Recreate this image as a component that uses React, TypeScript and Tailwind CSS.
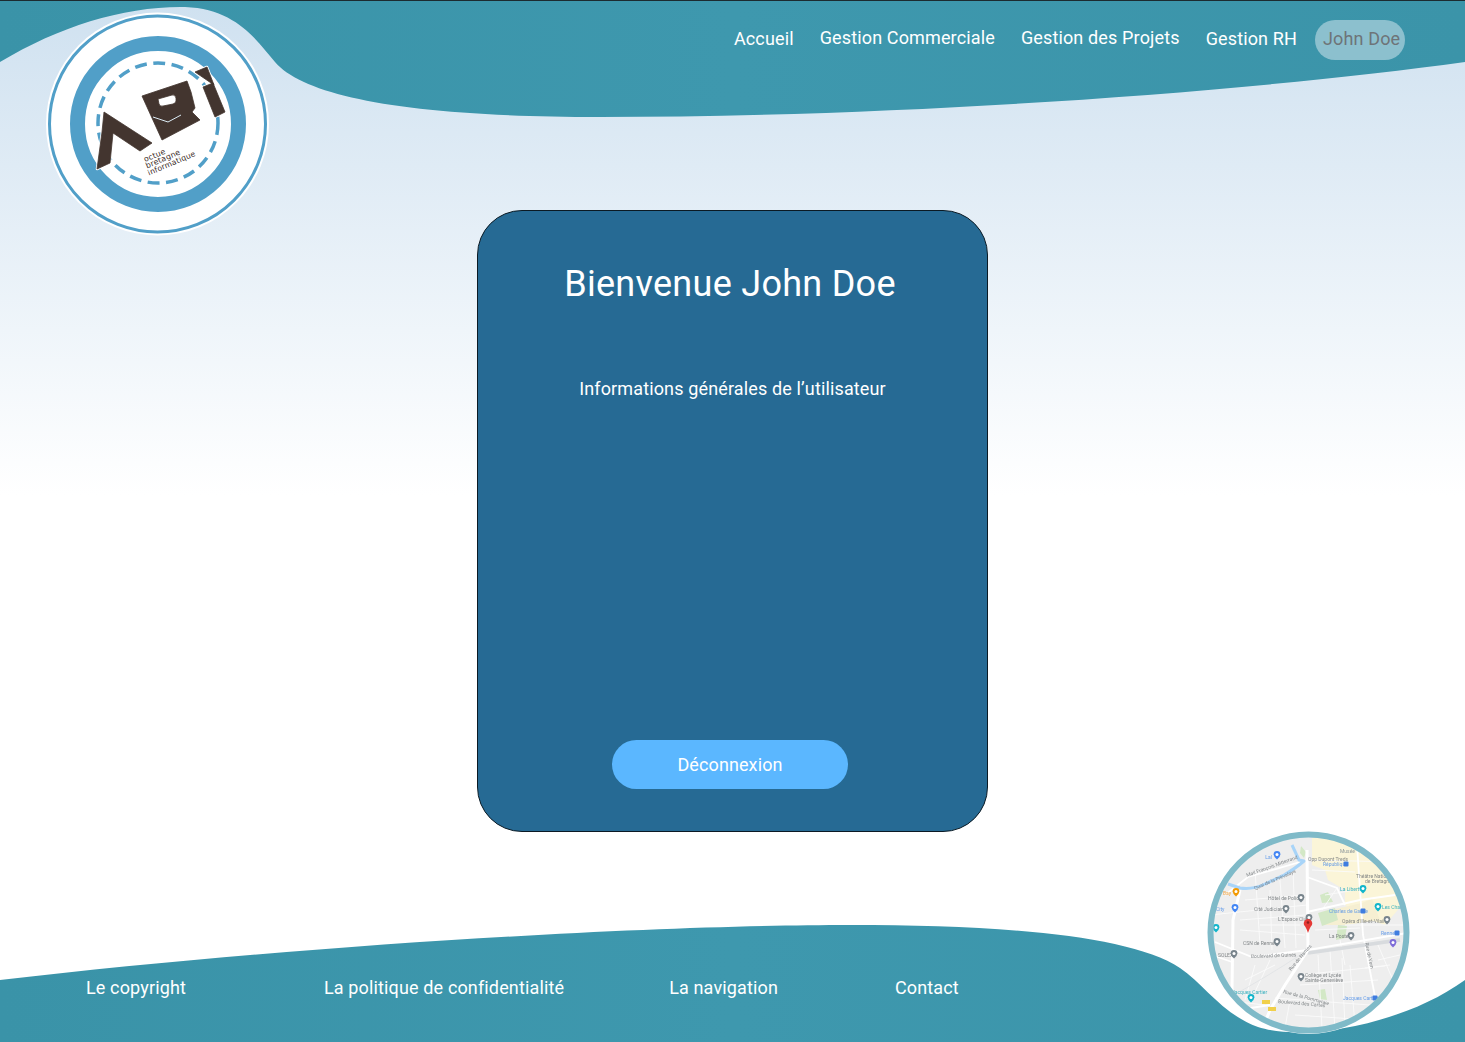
import React from "react";

const roboto = "font-['Roboto',sans-serif]";

function Waves() {
  return (
    <svg className="absolute left-0 top-0 h-[1042px] w-[1465px]" viewBox="0 0 1465 1042" aria-hidden="true">
      <defs>
        <linearGradient id="hdr" x1="0" y1="0" x2="1" y2="0">
          <stop offset="0" stopColor="#3a93a8" />
          <stop offset="0.5" stopColor="#3e98ae" />
          <stop offset="1" stopColor="#3b94a9" />
        </linearGradient>
      </defs>
      <path
        d="M0,62 C60,26 125,6 185,7 C235,9 255,38 275,62 C305,97 410,117 600,117 C900,117 1250,92 1465,62 L1465,0 L0,0 Z"
        fill="url(#hdr)"
      />
      <rect x="0" y="0" width="1465" height="1" fill="#1c2b30" />
      <path
        d="M0,980 C300,945 650,925 850,925 C1000,925 1130,935 1180,968 C1205,985 1222,1014 1258,1027 C1300,1041 1400,1027 1465,980 L1465,1042 L0,1042 Z"
        fill="url(#hdr)"
      />
    </svg>
  );
}

function Logo() {
  return (
    <svg className="absolute left-[46px] top-[12px] h-[224px] w-[224px]" viewBox="46 12 224 224" aria-label="ABI">
      <circle cx="157.5" cy="124" r="111.5" fill="#ffffff" />
      <circle cx="157.5" cy="124" r="108" fill="none" stroke="#519fc8" strokeWidth="3" />
      <circle cx="158" cy="124" r="80.5" fill="none" stroke="#519fc8" strokeWidth="15" />
      <circle cx="158" cy="123" r="60" fill="none" stroke="#519fc8" strokeWidth="3.5" strokeDasharray="12 6.5" />
      <g fill="#ffffff" stroke="#ffffff" strokeWidth="2.5" strokeLinejoin="round">
        <polygon points="104,112 152,143 140,151 113,133 110,163 97,169 102,132" />
        <polygon points="195,72 207,67 214,85" />
        <polygon points="203,87 213,83 225,112 215,117" />
      </g>
      <g fill="#43352f" stroke="#43352f" strokeWidth="0.8" strokeLinejoin="round">
        <polygon points="104,112 152,143 140,151 113,133 110,163 97,169 102,132" />
        <path
          fillRule="evenodd"
          d="M142,96 L187,81 L191,92 L195,108 L192,112 L200,120 L162,140 L142,96 Z M158,99 L172,95 Q175,94 176,98 L176,101 Q176,103 173,104 L163,106 Q160,107 159,104 Z"
        />
        <polygon points="195,72 207,67 214,85" />
        <polygon points="203,87 213,83 225,112 215,117" />
      </g>
      <path d="M153,117 L168,122 L181,115" fill="none" stroke="#dcecf5" strokeWidth="1" />
      <g fill="#3a2a25" fontFamily="'DejaVu Sans',sans-serif" fontSize="7.8" letterSpacing="0.2">
        <text transform="translate(145,162) rotate(-22)">octue</text>
        <text transform="translate(147,168.5) rotate(-23)">bretagne</text>
        <text transform="translate(149,175.5) rotate(-23)" fontSize="7.6">informatique</text>
      </g>
    </svg>
  );
}

type Label = { x: number; y: number; t: string; c: string; a?: "start" | "middle" | "end"; r?: number };

const labels: Label[] = [
  { x: 1272, y: 859, t: "Lal", c: "#4f8fe8", a: "end" },
  { x: 1308, y: 861, t: "Opp Dupont Treds", c: "#6f7477" },
  { x: 1340, y: 853, t: "Musée", c: "#7d8a92" },
  { x: 1323, y: 866, t: "République", c: "#4f8fe8" },
  { x: 1356, y: 878, t: "Théâtre National", c: "#6f7477" },
  { x: 1365, y: 883, t: "de Bretagne", c: "#6f7477" },
  { x: 1340, y: 891, t: "La Liberté", c: "#20a8b8" },
  { x: 1382, y: 909, t: "Les Champs", c: "#20a8b8" },
  { x: 1329, y: 913, t: "Charles de Gaulle", c: "#4f8fe8" },
  { x: 1342, y: 923, t: "Opéra d'Ille-et-Vilaine", c: "#6f7477" },
  { x: 1381, y: 935, t: "Rennes", c: "#4f8fe8" },
  { x: 1329, y: 938, t: "La Poste", c: "#6f7477" },
  { x: 1278, y: 921, t: "L'Espace Club", c: "#6f7477" },
  { x: 1254, y: 911, t: "Cité Judiciaire", c: "#6f7477" },
  { x: 1268, y: 900, t: "Hôtel de Police", c: "#6f7477" },
  { x: 1247, y: 877, t: "Mail François Mitterrand", c: "#6f7477", r: -20 },
  { x: 1255, y: 890, t: "Quai de la Prévalaye", c: "#6f7477", r: -23 },
  { x: 1223, y: 895, t: "Bay", c: "#ef9a2c" },
  { x: 1216, y: 911, t: "City", c: "#4f8fe8" },
  { x: 1243, y: 945, t: "CSN de Rennes", c: "#6f7477" },
  { x: 1218, y: 957, t: "SOLEX", c: "#6f7477" },
  { x: 1251, y: 958, t: "Boulevard de Guines", c: "#6f7477", r: -2 },
  { x: 1305, y: 977, t: "Collège et Lycée", c: "#6f7477" },
  { x: 1305, y: 982, t: "Sainte-Geneviève", c: "#6f7477" },
  { x: 1343, y: 1000, t: "Jacques Cartier", c: "#4f8fe8" },
  { x: 1232, y: 994, t: "Jacques Cartier", c: "#20a8b8" },
  { x: 1291, y: 971, t: "Rue de Nantes", c: "#6f7477", r: -50 },
  { x: 1365, y: 943, t: "Rue de Vern", c: "#6f7477", r: 78 },
  { x: 1283, y: 993, t: "Rue de la Pommeraie", c: "#6f7477", r: 15 },
  { x: 1278, y: 1003, t: "Boulevard des Cartes", c: "#6f7477", r: 5 },
];

const pins: { x: number; y: number; c: string }[] = [
  { x: 1277, y: 855, c: "#4285f4" },
  { x: 1363, y: 889, c: "#12b5cb" },
  { x: 1378, y: 907, c: "#12b5cb" },
  { x: 1387, y: 920, c: "#78848c" },
  { x: 1393, y: 943, c: "#7e6cd8" },
  { x: 1351, y: 936, c: "#78848c" },
  { x: 1309, y: 918, c: "#78848c" },
  { x: 1286, y: 909, c: "#78848c" },
  { x: 1301, y: 898, c: "#78848c" },
  { x: 1236, y: 892, c: "#f29900" },
  { x: 1235, y: 908, c: "#4285f4" },
  { x: 1216, y: 928, c: "#12b5cb" },
  { x: 1277, y: 942, c: "#78848c" },
  { x: 1234, y: 954, c: "#78848c" },
  { x: 1301, y: 977, c: "#78848c" },
  { x: 1251, y: 998, c: "#12b5cb" },
];

const badges: [number, number][] = [
  [1346, 864],
  [1363, 911],
  [1397, 933],
  [1375, 998],
];

const majorRoads = [
  "M1307,850 L1308,950",
  "M1308,950 L1285,985 L1270,1010 L1262,1030",
  "M1240,890 L1233,920 L1232,990",
];

const mediumRoads = [
  "M1215,942 L1252,957 L1308,950 L1407,933",
  "M1212,955 L1232,962",
  "M1357,845 L1363,935 L1377,1007",
  "M1225,895 L1248,877 L1307,860",
  "M1307,877 L1337,888 L1345,905",
  "M1307,912 L1360,900 L1395,895",
  "M1225,1012 L1270,1005",
];

const minorRoads = [
  "M1307,860 L1400,862",
  "M1210,915 L1307,905",
  "M1337,888 L1322,910",
  "M1300,975 L1385,966",
  "M1275,998 L1370,1005",
  "M1330,950 L1335,1030",
  "M1265,1005 L1220,1000",
  "M1345,925 L1405,925",
  "M1340,940 L1345,965",
  "M1260,925 L1300,925",
  "M1255,870 L1260,945",
  "M1280,880 L1285,948",
  "M1240,930 L1305,935",
  "M1350,965 L1355,1025",
  "M1378,960 L1400,955",
  "M1245,980 L1275,965",
  "M1270,890 L1272,950",
  "M1293,870 L1296,948",
  "M1245,900 L1305,895",
  "M1240,920 L1305,915",
  "M1318,955 L1322,1028",
  "M1342,958 L1345,1028",
  "M1365,968 L1390,965",
  "M1300,985 L1378,980",
  "M1295,1015 L1368,1020",
  "M1290,1000 L1285,1028",
  "M1378,945 L1395,985",
  "M1312,870 L1355,872",
  "M1325,895 L1355,890",
  "M1315,930 L1360,928",
  "M1255,965 L1245,1000",
  "M1270,960 L1255,992",
];

function MapBadge() {
  return (
    <svg className="absolute left-[1207px] top-[831px] h-[204px] w-[204px]" viewBox="1207 831 204 204" aria-label="Carte">
      <defs>
        <clipPath id="mapclip">
          <circle cx="1308.5" cy="932.5" r="98" />
        </clipPath>
      </defs>
      <circle cx="1308.5" cy="932.5" r="101.5" fill="#ffffff" />
      <g clipPath="url(#mapclip)">
        <g className="blur-[0.45px]">
          <rect x="1207" y="831" width="204" height="204" fill="#eeeeee" />
          <polygon
            points="1312,838 1400,838 1402,905 1385,925 1365,918 1345,905 1345,890 1328,880 1325,870 1312,865"
            fill="#fbf5d8"
          />
          <polygon points="1322,912 1362,903 1372,899 1380,920 1345,925 1322,925" fill="#f6efd2" />
          <g fill="#d3e8c6">
            <polygon points="1320,895 1328,892 1333,902 1322,903" />
            <polygon points="1318,913 1335,908 1338,920 1322,926" />
            <polygon points="1338,925 1347,926 1345,938 1336,940" />
            <polygon points="1318,990 1325,989 1327,1000 1320,999" />
            <polygon points="1301,846 1306,852 1304,858 1300,853" />
          </g>
          <g fill="none" stroke="#fbfbfb" strokeWidth="0.9">
            {minorRoads.map((d) => (
              <path key={d} d={d} />
            ))}
          </g>
          <path d="M1225,1000 Q1270,975 1300,955 L1400,938" fill="none" stroke="#dfe2e4" strokeWidth="0.8" />
          <g fill="none" stroke="#ffffff" strokeWidth="1.8">
            {mediumRoads.map((d) => (
              <path key={d} d={d} />
            ))}
          </g>
          <path d="M1308,953 L1400,940" fill="none" stroke="#d8dbde" strokeWidth="3.5" />
          <g fill="none" stroke="#ffffff" strokeWidth="3">
            {majorRoads.map((d) => (
              <path key={d} d={d} />
            ))}
          </g>
          <path
            d="M1228,884 L1240,888 Q1252,890 1265,884 L1284,875 Q1296,868 1304,861 L1299,860 L1292,845"
            fill="none"
            stroke="#a8d4f8"
            strokeWidth="3"
            strokeLinejoin="round"
          />
          <g fontFamily="'Roboto',sans-serif" fontSize="5" opacity="0.85">
            {labels.map((l) => (
              <text
                key={l.t + l.x}
                x={l.x}
                y={l.y}
                fill={l.c}
                textAnchor={l.a ?? "start"}
                transform={l.r ? `rotate(${l.r} ${l.x} ${l.y})` : undefined}
              >
                {l.t}
              </text>
            ))}
          </g>
          {pins.map((p) => (
            <g key={`${p.x}-${p.y}`}>
              <path
                d={`M${p.x - 3.4},${p.y - 0.5} a3.4,3.4 0 1 1 6.8,0 Q${p.x + 3},${p.y + 2.5} ${p.x},${p.y + 4.5} Q${p.x - 3},${p.y + 2.5} ${p.x - 3.4},${p.y - 0.5} Z`}
                fill={p.c}
              />
              <circle cx={p.x} cy={p.y - 0.5} r="1.5" fill="#ffffff" />
            </g>
          ))}
          {badges.map(([x, y]) => (
            <rect key={`${x}-${y}`} x={x - 2.5} y={y - 2.5} width="5" height="5" rx="1" fill="#3f7de0" />
          ))}
          <rect x="1262" y="1000" width="8" height="4" fill="#f1d04b" />
          <rect x="1268" y="1007" width="8" height="4" fill="#f1d04b" />
          <path d="M1308,933 Q1306,927 1304,925 a4.3,4.3 0 1 1 8,0 Q1310,927 1308,933 Z" fill="#e53935" />
          <circle cx="1308" cy="922.5" r="1.3" fill="#8d1f1c" />
        </g>
      </g>
      <circle cx="1308.5" cy="932.5" r="98" fill="none" stroke="#7fbac8" strokeWidth="6" />
    </svg>
  );
}

export default function App() {
  return (
    <div
      className={`relative flex h-[1042px] w-full flex-col overflow-hidden bg-[linear-gradient(180deg,#cfe1f0_0px,#ffffff_495px)] ${roboto}`}
    >
      <Waves />
      <Logo />
      <MapBadge />

      <header className="relative flex h-[210px] shrink-0 items-start justify-end pr-[60px] pt-[20px] text-[18px] leading-[21px] tracking-[0.14px] text-white">
        <a className="mr-[26px] mt-[8px]">Accueil</a>
        <a className="mr-[26px] mt-[7px]">Gestion Commerciale</a>
        <a className="mr-[26px] mt-[7px]">Gestion des Projets</a>
        <a className="mr-[18px] mt-[8px]">Gestion RH</a>
        <a className="flex h-[40px] w-[90px] items-center whitespace-nowrap rounded-[20px] bg-[#8cc0ce] pb-[3px] pl-[8px] text-[#6e7478]">
          John Doe
        </a>
      </header>

      <main className="relative mx-auto flex h-[622px] w-[511px] shrink-0 flex-col items-center rounded-[45px] border border-[#0b1a24] bg-[#266a94] text-white">
        <h1 className="mr-[5px] mt-[52px] text-[36px] font-normal leading-[42px] tracking-[0.28px]">Bienvenue John Doe</h1>
        <p className="mt-[73px] text-[18px] leading-[21px] tracking-[0.14px]">Informations générales de l’utilisateur</p>
        <button className="mr-[5px] mt-[341px] h-[49px] w-[236px] rounded-[25px] bg-[#5bb7ff] text-[18px] leading-[21px] tracking-[0.1px] text-white">
          Déconnexion
        </button>
      </main>

      <footer className="relative flex h-[210px] shrink-0 items-start pl-[86px] pt-[145px] text-[18px] leading-[21px] tracking-[0.14px] text-white">
        <a>Le copyright</a>
        <a className="ml-[138px]">La politique de confidentialité</a>
        <a className="ml-[105px]">La navigation</a>
        <a className="ml-[117px]">Contact</a>
      </footer>
    </div>
  );
}
